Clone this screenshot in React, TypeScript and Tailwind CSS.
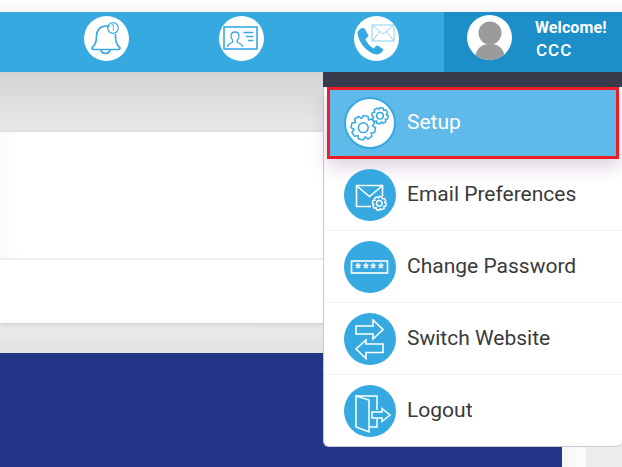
import React from 'react';

const Gear = ({ cx, cy, r }: { cx: number; cy: number; r: number }) => {
  const teeth = Array.from({ length: 8 }, (_, i) => {
    const a0 = (i * Math.PI) / 4 + 0.2;
    const pts = [
      [a0 - 0.39, r * 0.76],
      [a0 - 0.2, r],
      [a0 + 0.2, r],
      [a0 + 0.39, r * 0.76],
    ];
    return pts.map(([a, d]) => `${(cx + d * Math.cos(a)).toFixed(2)},${(cy + d * Math.sin(a)).toFixed(2)}`).join(' ');
  }).join(' ');
  return (
    <>
      <polygon points={teeth} fill="none" strokeLinejoin="round" />
      <circle cx={cx} cy={cy} r={r * 0.4} fill="none" />
    </>
  );
};

const BellIcon = () => (
  <svg viewBox="0 0 45 45" className="w-[45px] h-[45px]" fill="none" stroke="#37a9e1" strokeWidth="1.7">
    <path d="M25.500 10.800c-1-.5-2.300-.8-3.500-.8-6 0-9.500 4.500-9.500 10 0 5-1 8.800-4 11-1 1-.5 2.500 1 2.500h25c1.500 0 2-1.500 1-2.500-3-2.200-4-6.500-4-11 0-.6 0-1.200-.1-1.800" />
    <path d="M17 34c.5 2.300 2.500 3.300 4.500 3.300S25.500 36.300 26 34" />
    <circle cx="29" cy="12" r="5.300" strokeWidth="1.200" />
    <text x="29" y="15" textAnchor="middle" fontSize="8.500" fill="#37a9e1" stroke="none" fontFamily="Roboto, sans-serif">1</text>
  </svg>
);

const ContactIcon = () => (
  <svg viewBox="0 0 45 45" className="w-[45px] h-[45px]" fill="none" stroke="#37a9e1">
    <rect x="5" y="11" width="33" height="22" strokeWidth="1.600" />
    <path d="M8.500 31c0-3 2.500-3.500 4.500-4.500 1-.5 1-1.500.5-2.500-1-1-1.500-2.500-1.500-4 0-2.500 1.500-4 4-4s4 1.500 4 4c0 1.500-.5 3-1.500 4-.5 1-.5 2 .5 2.500 2 1 4.500 1.500 4.500 4.500" strokeWidth="1.300" />
    <path d="M24.500 16.500h10M27 20.500h7.500M29 24.500h5.500" strokeWidth="1.300" />
  </svg>
);

const PhoneMailIcon = () => (
  <svg viewBox="0 0 45 45" className="w-[45px] h-[45px]">
    <path d="M3.500 17c.5-2.500 3-5 5-5l2 .5 4 7c0 1.500-2.500 2.500-3 4 1.500 3.500 4.500 7 8 9 1.500-1 2-3 4-3l5.500 3.500c.5 1.500-1 3.500-3 4.500-2 1.200-4 1.200-6 .5-8-3-15-11-16.500-20.500z" fill="#37a9e1" />
    <g fill="#ffffff" stroke="#8fd0f0" strokeWidth="1">
      <rect x="18" y="9" width="22" height="16" />
      <path d="M18 9l11 9 11-9M18 25l8-9.500M40 25l-8-9.500" fill="none" />
    </g>
  </svg>
);

const GearsIcon = () => (
  <svg viewBox="0 0 52 52" className="w-[52px] h-[52px] shrink-0" stroke="#37a9e1" strokeWidth="1.500">
    <Gear cx={19.3} cy={30.7} r={12.3} />
    <Gear cx={36} cy={18.7} r={8.3} />
  </svg>
);

const MailGearIcon = () => (
  <svg viewBox="0 0 52 52" className="w-[52px] h-[52px]" stroke="#ffffff" fill="none" strokeWidth="1.600">
    <path d="M27 37.500H12.500V16.500h26V27" />
    <path d="M13 17l12.500 10.500L38 17" />
    <g strokeWidth="1.400">
      <Gear cx={35.3} cy={34.3} r={7} />
    </g>
  </svg>
);

const PasswordIcon = () => (
  <svg viewBox="0 0 52 52" className="w-[52px] h-[52px]">
    <rect x="7.500" y="20" width="36" height="12" fill="none" stroke="#ffffff" strokeWidth="1.600" />
    {[14, 21.7, 29, 36.7].map((x) => (
      <text key={x} x={x} y="31.500" textAnchor="middle" fill="#ffffff" fontSize="14" fontWeight="700" fontFamily="Liberation Sans, sans-serif">*</text>
    ))}
  </svg>
);

const SwitchIcon = () => (
  <svg viewBox="0 0 52 52" className="w-[52px] h-[52px]" stroke="#ffffff" fill="none" strokeWidth="1.600" strokeLinejoin="miter">
    <path d="M12 13h17V7l10 9.500L29 26v-5H12z" />
    <path d="M39 31H22v-4L12 36l10 9.500v-6h17z" />
  </svg>
);

const DoorIcon = () => (
  <svg viewBox="0 0 52 52" className="w-[52px] h-[52px]" stroke="#ffffff" fill="none" strokeWidth="1.500">
    <path d="M12 11v31l13 5V15z" />
    <path d="M12 11h21v14M33 34v8h-8" />
    <path d="M28 27h10v-3.500l8 6.500-8 6.500V33H28z" />
  </svg>
);

const TopCircle = ({ children }: { children: React.ReactNode }) => (
  <div className="w-[45px] h-[45px] rounded-full bg-white overflow-hidden shrink-0">
    {children}
  </div>
);

const MenuRow = ({ icon, label }: { icon: React.ReactNode; label: string }) => (
  <div className="h-[72px] border-b border-[#f3f3f3] last:border-b-0 flex items-center pl-5 gap-[11px]">
    <div className="w-[52px] h-[52px] rounded-full bg-[#37a9e1] shrink-0">
      {icon}
    </div>
    <span className="text-[21px] text-[#3a3a3a]">{label}</span>
  </div>
);

export default function App() {
  return (
    <div className="relative w-[622px] h-[467px] overflow-hidden bg-white font-['Roboto',sans-serif]">
      <div className="h-3 bg-gradient-to-b from-[#ffffff] to-[#f6f6f6]" />
      <header className="h-[60px] bg-[#37a9e1] flex">
        <div className="w-[444px] pl-[84px] pt-1 flex items-start gap-[90px]">
          <TopCircle><BellIcon /></TopCircle>
          <TopCircle><ContactIcon /></TopCircle>
          <TopCircle><PhoneMailIcon /></TopCircle>
        </div>
        <div className="flex-1 bg-[#1d8fc8] flex items-start pl-[23px] pt-[3px] gap-[23px]">
          <div className="w-[45px] h-[45px] rounded-full bg-white overflow-hidden shrink-0">
            <svg viewBox="0 0 45 45" className="w-[45px] h-[45px]" fill="#9b9b9b">
              <ellipse cx="23" cy="18" rx="11.500" ry="11.500" />
              <path d="M8 45c0-10 5-16 15-16s15 6 15 16z" />
            </svg>
          </div>
          <div className="text-white pt-[2px]">
            <div className="text-[16px] leading-[21px] font-bold tracking-[0.1px]">Welcome!</div>
            <div className="text-[17px] leading-[22px] font-medium tracking-[1px] pl-px mt-px">CCC</div>
          </div>
        </div>
      </header>

      <main className="h-[281px]">
        <div className="h-[60px] bg-gradient-to-b from-[#d4d4d4] to-[#e9e9e9]" />
        <div className="bg-white h-[191px] shadow-[0_1px_5px_rgba(0,0,0,0.15)] relative">
          <div className="h-[128px] border-b-2 border-[#eeeeee] bg-gradient-to-r from-[#fafafa] to-white to-[3%]" />
        </div>
        <div className="h-[30px] bg-gradient-to-b from-[#ebebeb] to-[#e1e1e1]" />
      </main>
      <div className="h-[114px] flex bg-[#ececec]">
        <div className="w-[562px] bg-[#233587]" />
        <div className="w-6 bg-gradient-to-r from-[#f5f5f5] to-[#fcfcfc]" />
      </div>

      {/* dropdown lies over the page */}
      <div className="absolute left-[323px] top-[72px] w-[299px] h-[375px] bg-white border-l border-b border-[#c8c8d2] rounded-b-[6px]">
        <div className="h-[15px] -ml-px bg-[#373b4a]" />
        <div className="ml-[3px] w-[292px] h-[72px] border-[3px] border-[#ee1c25] bg-[#5fbae9] flex items-center pl-[14px] gap-[11px] shadow-[0_8px_16px_rgba(120,80,140,0.25)]">
          <div className="w-[52px] h-[52px] rounded-full bg-white border-2 border-[#37a9e1] flex items-center justify-center shrink-0">
            <GearsIcon />
          </div>
          <span className="text-[21px] text-white">Setup</span>
        </div>
        <MenuRow icon={<MailGearIcon />} label="Email Preferences" />
        <MenuRow icon={<PasswordIcon />} label="Change Password" />
        <MenuRow icon={<SwitchIcon />} label="Switch Website" />
        <MenuRow icon={<DoorIcon />} label="Logout" />
      </div>
    </div>
  );
}
